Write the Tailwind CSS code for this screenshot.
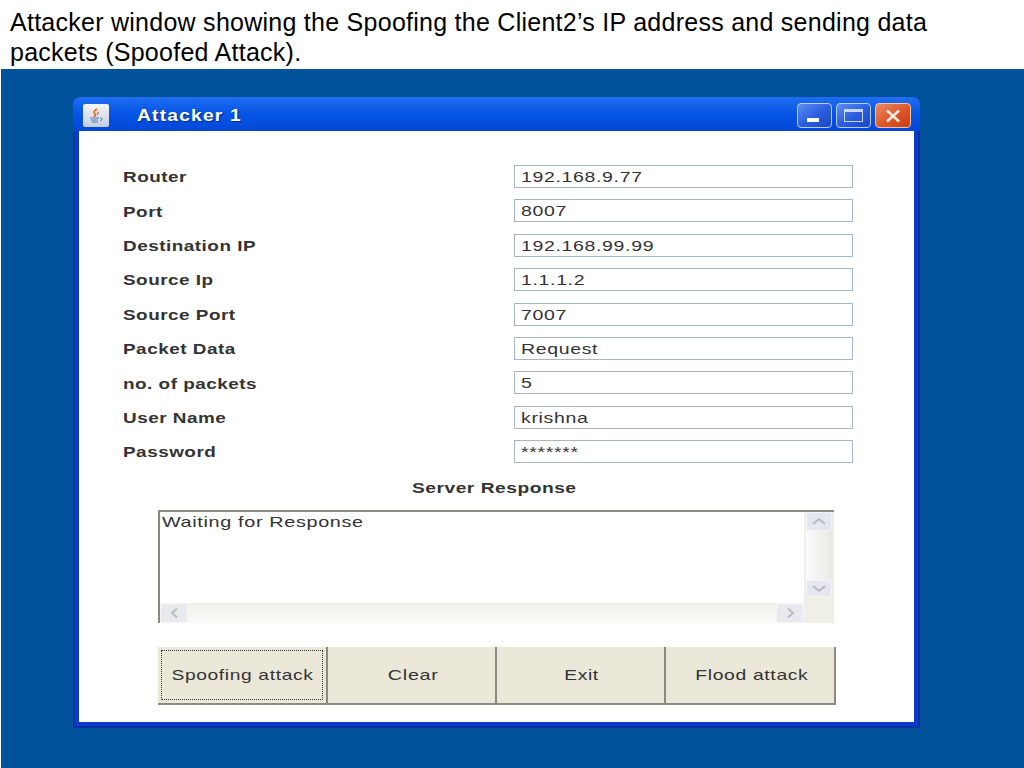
<!DOCTYPE html>
<html lang="en">

<head>
    <meta charset="UTF-8">
    <title>Attacker window</title>
    <script src="https://cdn.jsdelivr.net/npm/@tailwindcss/browser@4"></script>
</head>

<body class="w-[1024px] h-[768px] overflow-hidden bg-white font-['Liberation_Sans',Arial,sans-serif]">
    <!-- slide title -->
    <header class="h-[69px] pt-[7px] pl-[10px] text-[25px] tracking-[.26px] leading-[30px] text-black whitespace-nowrap">
        <p>Attacker window showing the Spoofing the Client2’s IP address and sending data</p>
        <p>packets (Spoofed Attack).</p>
    </header>

    <main class="h-[699px] ml-px bg-[#00529b] pl-[72px] pt-[28px]">
        <!-- window -->
        <div class="w-[847px] h-[631px] flex flex-col rounded-t-[7px] bg-[#0a3bd0] shadow-[inset_-2px_-2px_0_#0a2f9e,inset_2px_0_0_#0a2f9e]">
            <div class="h-[34px] shrink-0 flex items-center pt-[3px] pl-[10px] pr-[9px] rounded-t-[7px] bg-gradient-to-b from-[#1f6df0] via-[#0655e4] to-[#0447d8]">
                <div class="w-[26px] h-[23px] rounded-[2px] bg-gradient-to-b from-[#f4f4f4] to-[#c4cfe6] flex items-center justify-center">
                    <svg width="18" height="18" viewBox="0 0 18 18" fill="none">
                        <path d="M10 2c-3 2-4 3-2 5 1 1 0 2-1 3" stroke="#e8641b" stroke-width="1.6" />
                        <path d="M12 5c-2 1-2 2-1 3" stroke="#e8641b" stroke-width="1.2" />
                        <path d="M3 11h9M4 13h7M5 15h6" stroke="#5a7fa8" stroke-width="1.1" />
                        <path d="M13 11c3 0 3 2 0 3" stroke="#5a7fa8" stroke-width="1" />
                    </svg>
                </div>
                <span class="ml-[28px] w-[84px] text-[16px] font-bold text-white tracking-[1px] whitespace-nowrap origin-left scale-x-[1.2] [text-shadow:1px_1px_1px_#0a2a8c]">Attacker 1</span>
                <div class="ml-auto flex gap-[4px]">
                    <div class="w-[35px] h-[25px] rounded-[4px] border border-[#b8cdf5] bg-gradient-to-br from-[#5f8cf0] via-[#2c5fe0] to-[#1b45c8] flex items-end pl-[9px] pb-[5px]">
                        <div class="w-[12px] h-[4px] bg-white"></div>
                    </div>
                    <div class="w-[35px] h-[25px] rounded-[4px] border border-[#b8cdf5] bg-gradient-to-br from-[#5f8cf0] via-[#2c5fe0] to-[#1b45c8] flex items-center justify-center">
                        <div class="w-[19px] h-[13px] border border-t-[3px] border-[#c5d8fa]"></div>
                    </div>
                    <div class="w-[36px] h-[25px] rounded-[4px] border border-[#f0c4b0] bg-gradient-to-br from-[#ea8a63] via-[#dc5a2c] to-[#c93c0c] flex items-center justify-center">
                        <svg width="18" height="14" viewBox="0 0 18 14">
                            <path d="M3 1.500L15 12.500M15 1.500L3 12.500" stroke="#fbe8df" stroke-width="2.600" />
                        </svg>
                    </div>
                </div>
            </div>

            <!-- client area -->
            <div class="h-[591px] ml-[6px] mr-[6px] bg-white pt-[34px] flex flex-col">
                <div class="flex flex-col gap-[11.4px] pl-[44px]">
                    <div class="flex h-[23px] items-center">
                        <span class="w-[391px] pt-[2px] text-[15px] font-bold text-[#333] tracking-[.4px] origin-left scale-x-[1.26] whitespace-nowrap">Router</span>
                        <div class="w-[339px] h-[23px] border border-[#a5b5c5] pl-[6px] text-[15px] leading-[22px] text-[#333] tracking-[.5px]"><span class="inline-block origin-left scale-x-[1.3]">192.168.9.77</span></div>
                    </div>
                    <div class="flex h-[23px] items-center">
                        <span class="w-[391px] pt-[2px] text-[15px] font-bold text-[#333] tracking-[.4px] origin-left scale-x-[1.26] whitespace-nowrap">Port</span>
                        <div class="w-[339px] h-[23px] border border-[#a5b5c5] pl-[6px] text-[15px] leading-[22px] text-[#333] tracking-[.5px]"><span class="inline-block origin-left scale-x-[1.3]">8007</span></div>
                    </div>
                    <div class="flex h-[23px] items-center">
                        <span class="w-[391px] pt-[2px] text-[15px] font-bold text-[#333] tracking-[.4px] origin-left scale-x-[1.26] whitespace-nowrap">Destination IP</span>
                        <div class="w-[339px] h-[23px] border border-[#a5b5c5] pl-[6px] text-[15px] leading-[22px] text-[#333] tracking-[.5px]"><span class="inline-block origin-left scale-x-[1.3]">192.168.99.99</span></div>
                    </div>
                    <div class="flex h-[23px] items-center">
                        <span class="w-[391px] pt-[2px] text-[15px] font-bold text-[#333] tracking-[.4px] origin-left scale-x-[1.26] whitespace-nowrap">Source Ip</span>
                        <div class="w-[339px] h-[23px] border border-[#a5b5c5] pl-[6px] text-[15px] leading-[22px] text-[#333] tracking-[.5px]"><span class="inline-block origin-left scale-x-[1.3]">1.1.1.2</span></div>
                    </div>
                    <div class="flex h-[23px] items-center">
                        <span class="w-[391px] pt-[2px] text-[15px] font-bold text-[#333] tracking-[.4px] origin-left scale-x-[1.26] whitespace-nowrap">Source Port</span>
                        <div class="w-[339px] h-[23px] border border-[#a5b5c5] pl-[6px] text-[15px] leading-[22px] text-[#333] tracking-[.5px]"><span class="inline-block origin-left scale-x-[1.3]">7007</span></div>
                    </div>
                    <div class="flex h-[23px] items-center">
                        <span class="w-[391px] pt-[2px] text-[15px] font-bold text-[#333] tracking-[.4px] origin-left scale-x-[1.26] whitespace-nowrap">Packet Data</span>
                        <div class="w-[339px] h-[23px] border border-[#a5b5c5] pl-[6px] text-[15px] leading-[22px] text-[#333] tracking-[.5px]"><span class="inline-block origin-left scale-x-[1.3]">Request</span></div>
                    </div>
                    <div class="flex h-[23px] items-center">
                        <span class="w-[391px] pt-[2px] text-[15px] font-bold text-[#333] tracking-[.4px] origin-left scale-x-[1.26] whitespace-nowrap">no. of packets</span>
                        <div class="w-[339px] h-[23px] border border-[#a5b5c5] pl-[6px] text-[15px] leading-[22px] text-[#333] tracking-[.5px]"><span class="inline-block origin-left scale-x-[1.3]">5</span></div>
                    </div>
                    <div class="flex h-[23px] items-center">
                        <span class="w-[391px] pt-[2px] text-[15px] font-bold text-[#333] tracking-[.4px] origin-left scale-x-[1.26] whitespace-nowrap">User Name</span>
                        <div class="w-[339px] h-[23px] border border-[#a5b5c5] pl-[6px] text-[15px] leading-[22px] text-[#333] tracking-[.5px]"><span class="inline-block origin-left scale-x-[1.3]">krishna</span></div>
                    </div>
                    <div class="flex h-[23px] items-center">
                        <span class="w-[391px] pt-[2px] text-[15px] font-bold text-[#333] tracking-[.4px] origin-left scale-x-[1.26] whitespace-nowrap">Password</span>
                        <div class="w-[339px] h-[23px] border border-[#a5b5c5] pl-[6px] text-[15px] leading-[22px] text-[#333] tracking-[.5px]"><span class="inline-block origin-left scale-x-[1.3]">*******</span></div>
                    </div>
                </div>

                <div class="mt-[13px] h-[22px] pl-[333px] text-[15px] leading-[24px] font-bold text-[#333] tracking-[.4px]"><span class="inline-block origin-left scale-x-[1.28] whitespace-nowrap">Server Response</span></div>

                <!-- text area with scrollbars -->
                <div class="mt-[12px] ml-[79px] w-[676px] h-[113px] relative border-t-2 border-l-2 border-[#8a8a80] bg-white">
                    <div class="pl-[2px] text-[15px] leading-[20px] text-[#333] tracking-[.5px]"><span class="inline-block origin-left scale-x-[1.32] whitespace-nowrap">Waiting for Response</span></div>
                    <div class="absolute top-0 right-0 bottom-0 w-[30px] flex flex-col bg-[#efefe8]">
                        <div class="h-[85px] ml-[2px] mr-[2px] flex flex-col justify-between bg-gradient-to-r from-[#fafafa] to-[#e9e9e4]">
                            <div class="h-[19px] bg-[#e4e8ee] border border-[#f4f4f4] rounded-[2px] flex items-center justify-center">
                                <svg width="16" height="9" viewBox="0 0 16 9" fill="none"><path d="M2 7l6-5 6 5" stroke="#b4bac2" stroke-width="2" /></svg>
                            </div>
                            <div class="h-[17px] bg-[#e4e8ee] border border-[#f4f4f4] rounded-[2px] flex items-center justify-center">
                                <svg width="16" height="9" viewBox="0 0 16 9" fill="none"><path d="M2 2l6 5 6-5" stroke="#b4bac2" stroke-width="2" /></svg>
                            </div>
                        </div>
                    </div>
                    <div class="absolute left-0 right-[30px] bottom-0 h-[20px] flex justify-between bg-gradient-to-b from-[#f0f0ea] to-[#fafaf8]">
                        <div class="w-[28px] bg-[#e8eaee] border border-[#f6f6f6] rounded-[2px] flex items-center justify-center">
                            <svg width="9" height="12" viewBox="0 0 9 12" fill="none"><path d="M7 1.500L2 6l5 4.500" stroke="#b4bac2" stroke-width="1.800" /></svg>
                        </div>
                        <div class="w-[28px] bg-[#e8eaee] border border-[#f6f6f6] rounded-[2px] flex items-center justify-center">
                            <svg width="9" height="12" viewBox="0 0 9 12" fill="none"><path d="M2 1.500L7 6l-5 4.500" stroke="#b4bac2" stroke-width="1.800" /></svg>
                        </div>
                    </div>
                </div>

                <!-- buttons -->
                <div class="mt-[24px] ml-[79px] w-[678px] h-[58px] flex text-[15px] text-[#333] tracking-[.5px] border-b-2 border-[#8a8a80]">
                    <div class="w-[170px] p-[3px] bg-[#ebe8da] border-r-2 border-[#8a8a80]">
                        <div class="h-full flex items-center justify-center border border-dotted border-[#333]"><span class="scale-x-[1.28] whitespace-nowrap">Spoofing attack</span></div>
                    </div>
                    <div class="w-[169px] pl-[3px] bg-[#ebe8da] border-r-2 border-[#8a8a80] flex items-center justify-center"><span class="scale-x-[1.32] whitespace-nowrap">Clear</span></div>
                    <div class="w-[169px] pl-[3px] bg-[#ebe8da] border-r-2 border-[#8a8a80] flex items-center justify-center"><span class="scale-x-[1.28] whitespace-nowrap">Exit</span></div>
                    <div class="w-[170px] pl-[3px] bg-[#ebe8da] border-r-2 border-[#8a8a80] flex items-center justify-center"><span class="scale-x-[1.29] whitespace-nowrap">Flood attack</span></div>
                </div>
            </div>
        </div>
    </main>
</body>

</html>
